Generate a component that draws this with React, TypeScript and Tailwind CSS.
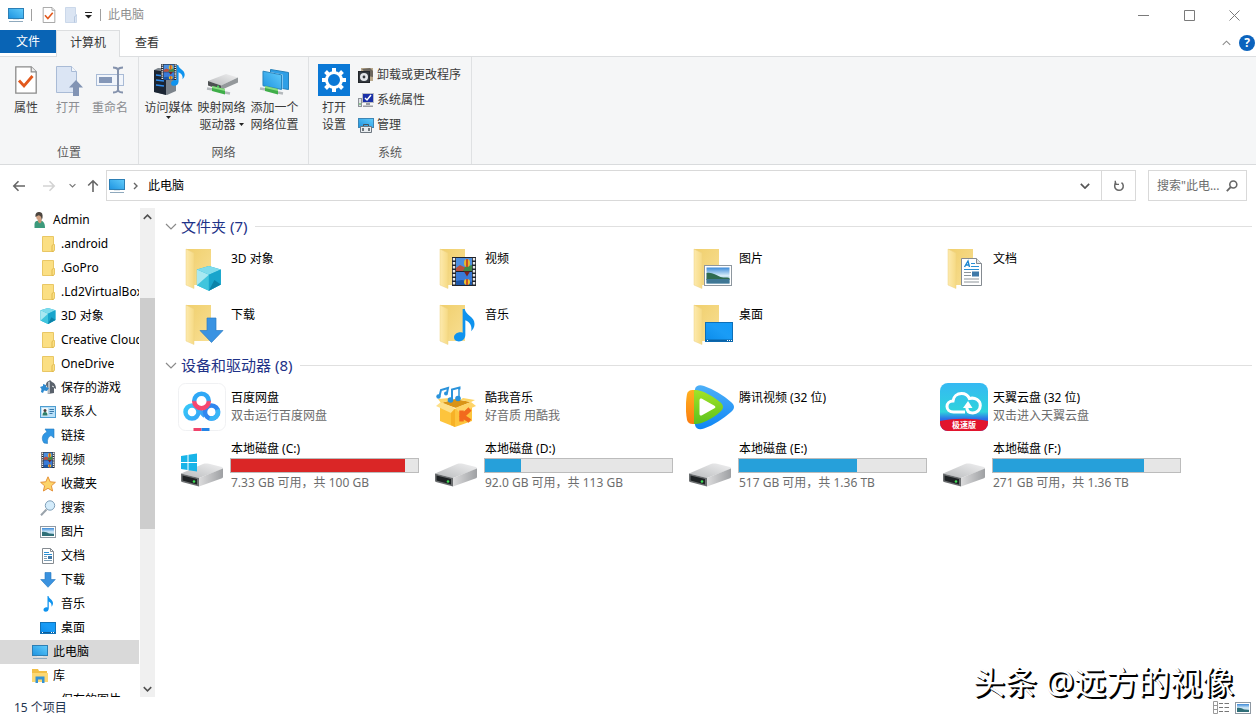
import type { ReactNode } from 'react';

type IconProps = { className?: string };

function Svg({ box, className, children }: { box: string; className: string; children: ReactNode }) {
  return (
    <svg viewBox={box} className={`shrink-0 ${className}`} fill="none" aria-hidden="true">
      {children}
    </svg>
  );
}

function Gradients() {
  return (
    <svg className="absolute size-0" aria-hidden="true">
      <defs>
        <linearGradient id="screen" x1="0" y1="1" x2="1" y2="0">
          <stop offset="0" stopColor="#1d93e0" />
          <stop offset="1" stopColor="#62ccfb" />
        </linearGradient>
        <linearGradient id="desk" x1="0" y1="1" x2="1" y2="0">
          <stop offset="0" stopColor="#0a8bea" />
          <stop offset="0.55" stopColor="#1a9cf6" />
          <stop offset="1" stopColor="#139bf8" />
        </linearGradient>
        <linearGradient id="folderBack" x1="0" y1="0" x2="1" y2="1">
          <stop offset="0" stopColor="#f0cf6c" />
          <stop offset="1" stopColor="#f8df94" />
        </linearGradient>
        <linearGradient id="folderFront" x1="0" y1="0" x2="1" y2="0">
          <stop offset="0" stopColor="#fdeaae" />
          <stop offset="1" stopColor="#f6da84" />
        </linearGradient>
        <linearGradient id="sky" x1="0" y1="0" x2="0" y2="1">
          <stop offset="0" stopColor="#3c8ad8" />
          <stop offset="0.5" stopColor="#d4ebf8" />
          <stop offset="1" stopColor="#7fb0c8" />
        </linearGradient>
        <linearGradient id="driveTop" x1="0" y1="1" x2="1" y2="0">
          <stop offset="0" stopColor="#b9bbbd" />
          <stop offset="1" stopColor="#f0f0f1" />
        </linearGradient>
        <linearGradient id="driveSide" x1="0" y1="0" x2="1" y2="0">
          <stop offset="0" stopColor="#dcdcdd" />
          <stop offset="1" stopColor="#9ea0a3" />
        </linearGradient>
        <linearGradient id="play" x1="0" y1="0" x2="0" y2="1">
          <stop offset="0" stopColor="#4db0f8" />
          <stop offset="1" stopColor="#0f86f5" />
        </linearGradient>
        <linearGradient id="playGreen" x1="0" y1="0" x2="0" y2="1">
          <stop offset="0" stopColor="#a3e327" />
          <stop offset="1" stopColor="#5cc21d" />
        </linearGradient>
        <linearGradient id="playOrange" x1="0" y1="0" x2="0" y2="1">
          <stop offset="0" stopColor="#ffb11f" />
          <stop offset="1" stopColor="#fb7c10" />
        </linearGradient>
        <linearGradient id="cloud" x1="0" y1="0" x2="0" y2="1">
          <stop offset="0" stopColor="#35b9f3" />
          <stop offset="0.6" stopColor="#2fd3dc" />
          <stop offset="0.75" stopColor="#2b6fe8" />
          <stop offset="1" stopColor="#2b52e0" />
        </linearGradient>
        <linearGradient id="baiduLeft" x1="0" y1="0" x2="1" y2="1">
          <stop offset="0" stopColor="#37c8f8" />
          <stop offset="1" stopColor="#35a6f7" />
        </linearGradient>
        <linearGradient id="baiduTop" x1="0" y1="0" x2="0" y2="1">
          <stop offset="0.45" stopColor="#2fa8f6" />
          <stop offset="0.55" stopColor="#f6466f" />
        </linearGradient>
      </defs>
    </svg>
  );
}

function PcIcon({ className = 'size-4' }: IconProps) {
  return (
    <Svg box="0 0 16 16" className={className}>
      <rect x="0.500" y="1.500" width="15" height="10" fill="url(#screen)" stroke="#2c7fb5" />
      <path d="M5 12.500h6" stroke="#dfe8ee" />
      <path d="M1 14.500h14" stroke="#8fa9bd" />
    </Svg>
  );
}

function CheckDocIcon({ className = 'size-4' }: IconProps) {
  return (
    <Svg box="0 0 22 28" className={className}>
      <path d="M.8.8h15.400l5 5v21.400H.8z" fill="#fff" stroke="#8a8a8a" strokeWidth="1.300" />
      <path d="M16.200.8v5h5" fill="#eee" stroke="#8a8a8a" strokeWidth="1.200" />
      <path d="M4 14.500l5 5.500 8.500-10" stroke="#e2581c" strokeWidth="2.800" />
    </Svg>
  );
}

function OpenDocIcon({ className = 'size-8' }: IconProps) {
  return (
    <Svg box="0 0 32 32" className={className}>
      <path d="M4.500 2.500h15l5 5v21h-20z" fill="#dbe5f4" stroke="#a9bbd6" />
      <path d="M19.500 2.500v5h5" fill="#f2f6fb" stroke="#a9bbd6" />
      <path d="M24 16l7 7.500h-4V32h-6v-8.500h-4z" fill="#8294b4" />
    </Svg>
  );
}

function RenameIcon({ className = 'size-8' }: IconProps) {
  return (
    <Svg box="0 0 32 32" className={className}>
      <rect x="2.500" y="10.500" width="27" height="11" fill="#f1f5fb" stroke="#a9bbd6" />
      <rect x="5" y="13" width="13" height="6" fill="#8497b8" />
      <path d="M19 3.500c2.500 0 4 .5 5 2 1-1.500 2.500-2 5-2M19 28.500c2.500 0 4-.5 5-2 1 1.500 2.500 2 5 2M24 5v22" stroke="#8593ad" strokeWidth="2" />
    </Svg>
  );
}

function FilmArt() {
  return (
    <>
      <rect width="24" height="29" fill="#20242c" />
      <rect x="4" y="1" width="16" height="13" fill="#4d8fe0" />
      <rect x="4" y="15" width="16" height="13" fill="#3a7bd8" />
      <path d="M4 11l4-3 4 2 8-1v5H4z" fill="#b8503f" />
      <path d="M13 10l7-2v6h-9z" fill="#3f8a4a" />
      <path d="M4 24l6-1 10 2v3H4z" fill="#1d57a8" />
      <ellipse cx="15" cy="6" rx="3" ry="4" fill="#e7b92b" />
      <path d="M15 2v8" stroke="#c02d22" strokeWidth="1.500" />
      <path d="M12 14.500l3 5 3-5z" fill="#7b241d" />
      <ellipse cx="15" cy="25" rx="3" ry="3" fill="#eec52e" />
      <path d="M15 22v6" stroke="#c02d22" strokeWidth="1.500" />
      <path d="M2 1v28M22 1v28" stroke="#e9e9e9" strokeWidth="2.400" strokeDasharray="2.400 1.600" />
    </>
  );
}

function NoteShape() {
  return (
    <path
      d="M8 0h2c.5 6 9 7 9 14.500 0 3-1.500 5.500-3 7 .8-5-1-8.500-5.500-10.500V25c0 4-3 6.500-6 6.500S0 30 0 27.500C0 24 4.500 21.500 8 23z"
      fill="#0f93ee"
    />
  );
}

function MediaIcon({ className = 'size-8' }: IconProps) {
  return (
    <Svg box="0 0 32 32" className={className}>
      <path d="M1 6l4-2 18 1v22l-9 4-13-3z" fill="#7c848c" />
      <path d="M1 6l12 2v23L1 28z" fill="#1b2533" />
      <path d="M3 11l8 1M3 16l8 1M3 21l8 1" stroke="#2f8df0" strokeWidth="1.500" />
      <g transform="translate(8 0) scale(.65 .55)">
        <FilmArt />
      </g>
      <g transform="translate(18 1) scale(.72 .66)">
        <NoteShape />
      </g>
    </Svg>
  );
}

function Cable() {
  return (
    <>
      <path d="M1 24.500l6 1M19 28.500l5 1" stroke="#b4b9bc" strokeWidth="2.500" />
      <path d="M6 22l13 3v5.500L6 27z" fill="#3fae49" />
      <path d="M6 22l13 3v2L6 24z" fill="#8bdc84" />
    </>
  );
}

function MapDriveIcon({ className = 'size-8' }: IconProps) {
  return (
    <Svg box="0 0 32 32" className={className}>
      <path d="M2 17L20 10l12 3.500-17 8z" fill="url(#driveTop)" />
      <path d="M2 17l13 4.500V26L2 21.500z" fill="#4d5052" />
      <path d="M15 21.500l17-8v5L15 26z" fill="#94989b" />
      <circle cx="12" cy="22.500" r="1" fill="#45e05a" />
      <Cable />
    </Svg>
  );
}

function NetPlaceIcon({ className = 'size-8' }: IconProps) {
  return (
    <Svg box="0 0 32 32" className={className}>
      <path d="M11.500 5.500l18 3v17l-18-3z" fill="#2f9fe6" stroke="#2580b8" />
      <path d="M3.500 6.500l20 4v16l-20-4z" fill="#d6eefb" />
      <path d="M4 7.200l18.500 3.700v14.500L4 21.700z" fill="url(#screen)" stroke="#2b86bd" />
      <Cable />
    </Svg>
  );
}

const teeth = [0, 45, 90, 135, 180, 225, 270, 315];

function GearIcon({ className = 'size-8' }: IconProps) {
  return (
    <Svg box="0 0 32 32" className={className}>
      <rect width="32" height="32" fill="#0a78d6" />
      <circle cx="16" cy="16" r="7.500" stroke="#fff" strokeWidth="3" />
      {teeth.map((angle) => (
        <path key={angle} d="M14 4h4v4h-4z" fill="#fff" transform={`rotate(${angle} 16 16)`} />
      ))}
    </Svg>
  );
}

function UninstallIcon() {
  return (
    <Svg box="0 0 16 16" className="size-4">
      <path d="M3 1h12v13H3z" fill="#b9a98c" />
      <path d="M4 2l8-1 3 3v6l-5-1z" fill="#6c675f" />
      <rect x="0.500" y="4.500" width="11" height="11" fill="#33383d" stroke="#22262a" />
      <circle cx="6" cy="10" r="4" fill="#e2e5e8" />
      <circle cx="6" cy="10" r="1.400" fill="#33383d" />
    </Svg>
  );
}

function SysPropsIcon() {
  return (
    <Svg box="0 0 16 16" className="size-4">
      <rect x="4.500" y="1.500" width="11" height="9" fill="#1a30a8" stroke="#b9bcc4" />
      <path d="M7 6l2 2 4-5" stroke="#fff" strokeWidth="1.500" />
      <path d="M8 11h4v2H8zM5 13.500h10v1.500H5z" fill="#9a9da3" />
      <rect x="0.500" y="6.500" width="3" height="8" fill="#dfe2e6" stroke="#8f949a" />
      <path d="M2 11v2" stroke="#3aa845" />
    </Svg>
  );
}

function ManageIcon() {
  return (
    <Svg box="0 0 16 16" className="size-4">
      <rect x="0.500" y="1.500" width="15" height="9" fill="url(#screen)" stroke="#3d86b5" />
      <path d="M2.500 15.500v-6h11v6z" fill="#e8ecef" stroke="#6e7780" />
      <path d="M5.500 9V7.500h5V9" stroke="#4a525a" />
      <path d="M5 11v3M11 11v3" stroke="#4a525a" strokeWidth="1.500" />
    </Svg>
  );
}

function UserIcon() {
  return (
    <Svg box="0 0 16 16" className="size-4">
      <path d="M2.500 16V12c0-2.500 2-3.500 5-3.500S13 10 13 16z" fill="#3c9a7c" />
      <path d="M6 7h3.500v3L8 11.500 6 10z" fill="#c99776" />
      <ellipse cx="7" cy="4.500" rx="2.800" ry="3.600" fill="#d2a384" />
      <path d="M3.500 5C3 1 5 0 7.500 0S11 2 10.500 6l-1 2c0-3-.5-4.500-3-4.800z" fill="#4c463f" />
    </Svg>
  );
}

function FolderSmallIcon() {
  return (
    <Svg box="0 0 16 16" className="size-4">
      <path d="M2.500.5h11v8h1v6h-1v1h-11z" fill="#fbdf83" stroke="#e9c765" />
      <path d="M13.500 8.500l-1.500 1v6h1.500" stroke="#e0b94c" />
    </Svg>
  );
}

function CubeArt() {
  return (
    <>
      <path d="M14 0l13 4v17l-13 7L1 22V4z" fill="#1cb2d3" />
      <path d="M14 0l13 4-13 6L1 4z" fill="#7fdcec" />
      <path d="M1 4l13 6v18L1 22z" fill="#40c5dd" />
      <path d="M1 4l13 6-13 12z" fill="#a8e8f1" />
      <path d="M14 10l13-6v17l-13 7z" fill="#18a5cc" />
      <path d="M14 28l13-7-7-5z" fill="#0c83a8" />
    </>
  );
}

function CubeSmallIcon() {
  return (
    <Svg box="0 0 28 28" className="size-4">
      <CubeArt />
    </Svg>
  );
}

function GamesIcon() {
  return (
    <Svg box="0 0 16 16" className="size-4">
      <path d="M6 5c0-3 2-4 3-4l1-1 2 2c3 1 4 4 4 7l-2-1v5l-6 1V9z" fill="#59616b" />
      <path d="M8 2l2-.5v12L7.500 14z" fill="#b4bbc2" />
      <path d="M0 7l3-1V4l3 1v2l3 1-2 3-3-.5L3 13l-2-1 .5-3z" fill="#2d8ad0" />
      <path d="M12 6l2 1" stroke="#e8ecef" />
    </Svg>
  );
}

function ContactsIcon() {
  return (
    <Svg box="0 0 16 16" className="size-4">
      <rect x="0.500" y="2.500" width="15" height="11" fill="#b9e0f8" stroke="#4d9dd0" />
      <rect x="2" y="4" width="6" height="7.500" fill="#f3f8fb" />
      <path d="M2.500 11.500c0-3 1-3.500 2.500-3.500s2.500.5 2.500 3.500z" fill="#2f7e68" />
      <circle cx="5" cy="6.500" r="1.500" fill="#4a4038" />
      <path d="M9.500 5.500h4.500M9.500 7.500h4.500M9.500 9.500h3" stroke="#3a79aa" />
    </Svg>
  );
}

function LinkArrowIcon() {
  return (
    <Svg box="0 0 16 16" className="size-4">
      <path d="M5 1l9 0v9l-3-2.500c-2.500 1-4 3.500-3.500 8L4 15c-3-4-2-9 3-11z" fill="#3197e4" stroke="#1f78c0" strokeWidth=".6" />
    </Svg>
  );
}

function FilmSmallIcon() {
  return (
    <Svg box="-2 0 28 29" className="size-4">
      <FilmArt />
    </Svg>
  );
}

function StarIcon() {
  return (
    <Svg box="0 0 16 16" className="size-4">
      <path d="M8 .8l2.200 5 5.200.5-4 3.500 1.200 5.200L8 12.300 3.400 15l1.200-5.200-4-3.500 5.200-.5z" fill="#fcd46a" stroke="#e5933a" />
    </Svg>
  );
}

function MagnifierIcon() {
  return (
    <Svg box="0 0 16 16" className="size-4">
      <path d="M6.500 9.500L1 15.200" stroke="#9aa3ab" strokeWidth="2" />
      <circle cx="10" cy="5.500" r="4.700" fill="#d4ecfb" stroke="#7f9fb8" />
    </Svg>
  );
}

function PictureIcon({ className = 'size-4' }: IconProps) {
  return (
    <Svg box="0 0 16 16" className={className}>
      <rect x="0.500" y="2.500" width="15" height="11" fill="#fff" stroke="#8f99a3" />
      <rect x="2" y="4" width="12" height="8" fill="url(#sky)" />
      <path d="M2 8c3-.5 5 .5 7 1.500l5 .5v2H2z" fill="#2f6f78" />
    </Svg>
  );
}

function DocArt() {
  return (
    <>
      <path d="M.5.5h15l5 5v22H.5z" fill="#fff" stroke="#858b91" />
      <path d="M15.500.5v5h5" fill="#e5e8ea" stroke="#858b91" />
      <path d="M3.500 9L7 3l1.500 6M5 7h3" stroke="#1c86d1" strokeWidth="1.400" />
      <path d="M10 5.500h4M10 8.500h8M3 11.500h15" stroke="#2b8fd4" strokeWidth="1.200" />
      <path d="M3 14.500h7M3 17.500h7M3 21h15M3 24h15" stroke="#8d9499" />
      <rect x="11" y="13.500" width="7" height="5" fill="#3f79a8" />
    </>
  );
}

function DocSmallIcon() {
  return (
    <Svg box="0 0 16 16" className="size-4">
      <path d="M2.500.5h8l3 3v12h-11z" fill="#fff" stroke="#858b91" />
      <path d="M10.500.5v3h3" stroke="#858b91" />
      <path d="M4 4.500h5M4 6.500h8" stroke="#2b8fd4" />
      <path d="M4 8.500h3M4 10.500h3M4 12.500h8" stroke="#7d9db4" />
      <path d="M8 8h4v3H8z" fill="#3f79a8" />
    </Svg>
  );
}

function DownSmallIcon() {
  return (
    <Svg box="0 0 16 16" className="size-4">
      <path d="M5 .5h6v7h4.300L8 15.300.7 7.500H5z" fill="#3a92df" stroke="#2377bd" strokeWidth=".6" />
    </Svg>
  );
}

function NoteSmallIcon() {
  return (
    <Svg box="-7 0 32 32" className="size-4">
      <NoteShape />
    </Svg>
  );
}

function DesktopSmallIcon() {
  return (
    <Svg box="0 0 16 16" className="size-4">
      <rect x="0.500" y="2.500" width="15" height="11" fill="url(#desk)" stroke="#1273b8" />
      <path d="M1 12.500h14" stroke="#0c5c98" />
      <path d="M2 12.500h1M11 12.500h1M13 12.500h1" stroke="#fff" />
    </Svg>
  );
}

function LibraryIcon() {
  return (
    <Svg box="0 0 16 16" className="size-4">
      <path d="M0 1h6l1 2h8v11H0z" fill="#f2bf45" />
      <path d="M0 5h16v9H0z" fill="#fcd873" />
      <path d="M3.500 15V8.500h9V15h-2.500v-3.500H6V15z" fill="#3492d3" />
    </Svg>
  );
}

function BigFolder({ children }: { children?: ReactNode }) {
  return (
    <Svg box="0 0 48 48" className="size-12">
      <path d="M8 4h25v36H13z" fill="url(#folderBack)" />
      <path d="M8 4l8 4v35.500L8 40z" fill="url(#folderFront)" stroke="#ecd083" strokeWidth=".5" />
      {children}
    </Svg>
  );
}

const folderArt: Record<string, ReactNode> = {
  cube: (
    <g transform="translate(18 21) scale(.92 .88)">
      <CubeArt />
    </g>
  ),
  film: (
    <g transform="translate(20 12)">
      <FilmArt />
    </g>
  ),
  picture: (
    <>
      <rect x="18.500" y="20.500" width="27" height="20" fill="#fff" stroke="#8e979f" />
      <rect x="20.500" y="22.500" width="23" height="16" fill="url(#sky)" />
      <path d="M20.500 28c6-1 9 2 14 4 4 1 6 0 9 1v2h-23z" fill="#2f6b4f" />
      <path d="M20.500 34h23v4.500h-23z" fill="#3f7795" />
    </>
  ),
  doc: (
    <g transform="translate(21 13)">
      <DocArt />
    </g>
  ),
  down: <path d="M29 17h9v12.500h7L33.500 41.500 22 29.500h7z" fill="#3a93e2" stroke="#2c7cc4" strokeWidth=".7" />,
  note: (
    <g transform="translate(22 8) scale(1.080 1.030)">
      <NoteShape />
    </g>
  ),
  desktop: (
    <>
      <rect x="19.500" y="21.500" width="27" height="19" fill="url(#desk)" stroke="#0d6fb8" />
      <path d="M19 39.500h28" stroke="#0a62a6" strokeWidth="2" />
      <path d="M21 39.500h1M41 39.500h1M43 39.500h1M45 39.500h1" stroke="#fff" />
    </>
  ),
};

function BaiduIcon() {
  return (
    <Svg box="0 0 48 48" className="size-12">
      <rect x="0.500" y="0.500" width="47" height="47" rx="7" fill="#fff" stroke="#f0f1f3" />
      <path d="M27 33c-3-2.500-5-6-8-8" stroke="#3aa4f6" strokeWidth="4.500" />
      <circle cx="14" cy="29" r="6.500" stroke="url(#baiduLeft)" strokeWidth="4.500" />
      <circle cx="33.500" cy="29" r="6.500" stroke="#2f86f0" strokeWidth="4.500" />
      <path d="M39.500 26.500a6.500 6.500 0 0 1-8 8.700" stroke="#38b6f7" strokeWidth="4.500" />
      <circle cx="23.500" cy="18" r="7.300" fill="#fff" stroke="url(#baiduTop)" strokeWidth="4.500" />
      <path d="M15.500 45h8v3h-8z" fill="#f0436b" />
      <path d="M23.500 45h8v3h-8z" fill="#2384e6" />
    </Svg>
  );
}

function KuwoIcon() {
  return (
    <Svg box="0 0 48 48" className="size-12">
      <path d="M8 21l15 5 17-5v17l-17 6-15-6z" fill="#fdc43c" />
      <path d="M9 20l14-4 16 3-15 6z" fill="#d99417" />
      <path d="M9 19l14 6-4 5L4 23z" fill="#fee08a" />
      <path d="M39 19l-16 6 5 5 16-7z" fill="#fed468" />
      <path d="M9 20l-3-4 12-1 2 2zM39 19l4-2-12-2-3 2z" fill="#fdd566" />
      <path d="M23 26v18l-4-2V30z" fill="#f7b126" />
      <path d="M29.500 27.500v11M38 26l-7.500 7L38 38" stroke="#f26a1d" strokeWidth="4.500" />
      <path d="M7.500 13l1.500-6 7-2-1 5" stroke="#2b93db" strokeWidth="2" />
      <path d="M20 17V6.500L27.500 4.500v2" stroke="#2b93db" strokeWidth="2" />
      <path d="M27 6v9" stroke="#2b93db" strokeWidth="1.500" />
      <circle cx="6.500" cy="13.500" r="2.200" fill="#2b93db" />
      <circle cx="14" cy="10.500" r="2" fill="#2b93db" />
      <circle cx="18.500" cy="17" r="2.800" fill="#2b93db" />
      <circle cx="26" cy="15.500" r="2.800" fill="#2b93db" />
    </Svg>
  );
}

function TencentIcon() {
  return (
    <Svg box="0 0 48 48" className="size-12">
      <path d="M9 6c1-4 5-4.500 9-3 10 3.500 19 9 27 16 4 3 4 7 0 10-8 7-17 13-27 16.500-4 1.500-8 1-9-3.500-2-12-2-24 0-36z" fill="url(#play)" />
      <path d="M8 7c-4-.5-6 1-7 4-1.500 9-1.500 17 0 26 1 3 3 4.500 7 4z" fill="url(#playOrange)" />
      <path d="M8 7c6-1 18 5 26 12 4 3 4 7 0 10-8 7-20 13-26 12z" fill="url(#playGreen)" />
      <path d="M13.500 17c0-1.500 1.500-2 2.500-1.300l12.500 7c1.200.8 1.200 1.900 0 2.600L16 32.300c-1 .6-2.500.2-2.500-1.300z" fill="#fff" />
    </Svg>
  );
}

function TianyiIcon() {
  return (
    <svg viewBox="0 0 48 48" className="size-12 shrink-0" fill="none" aria-hidden="true">
      <clipPath id="tianyiClip">
        <rect width="48" height="48" rx="8" />
      </clipPath>
      <g clipPath="url(#tianyiClip)">
        <rect width="48" height="48" fill="url(#cloud)" />
        <path d="M0 38c15-3 33-3 48 0v10H0z" fill="#e2142d" />
      </g>
      <path d="M25 29H13.500C9.500 29 7 26.500 7 23.500s2.500-5.500 6-5.500c.5-4.500 4-7.500 8.500-7.500 4 0 6.500 2 7.800 5 6-1.500 11 2 11 7 0 4.500-3.500 7.500-7.500 7.500-4 0-6-2-6-6" stroke="#fff" strokeWidth="3" />
      <path d="M23 25l5-7 4.500 7z" fill="#fff" />
      <text x="24" y="45" textAnchor="middle" fontSize="8" fontWeight="700" fill="#fff" fontFamily="'Noto Sans CJK SC', sans-serif">
        极速版
      </text>
    </svg>
  );
}

function DriveIcon({ windows = false }: { windows?: boolean }) {
  return (
    <Svg box="0 -4 48 48" className="size-12">
      <path d="M3 29.500L25 20c2-.6 4-.6 6-.2l12 3c1.500.4 2 1 2 2L21 34z" fill="url(#driveTop)" />
      <path d="M3 29.500L21 34v8.500L4 38c-.7-.2-1-.6-1-1.200z" fill="#6b6e70" />
      <path d="M4.500 31.500L19 35v5.500L4.500 36.500z" fill="#1e2224" />
      <path d="M21 34l24-9.500V33c0 .6-.5 1-1 1.200L21 42.500z" fill="url(#driveSide)" />
      <circle cx="16" cy="37.500" r="1.300" fill="#3ee055" />
      {windows && <path d="M3 12l6.500-1v7H3zM10.500 10.800l8.500-1.300V18h-8.500zM3 19h6.500v7L3 25zM10.500 19H19v8.500l-8.500-1.300z" fill="#18b4e8" />}
    </Svg>
  );
}

function Caret({ className = '' }: IconProps) {
  return (
    <Svg box="0 0 5 3" className={`h-[3px] w-[5px] ${className}`}>
      <path d="M0 0h5L2.500 3z" fill="#222" />
    </Svg>
  );
}

function Chevron({ className = '', d = 'M1 1l5 5 5-5', width = 1.2 }: { className?: string; d?: string; width?: number }) {
  return (
    <Svg box="0 0 12 7" className={className}>
      <path d={d} stroke="currentColor" strokeWidth={width} />
    </Svg>
  );
}

function RibbonButton({ icon, lines, disabled, caret, wide }: { icon: ReactNode; lines: string[]; disabled?: boolean; caret?: 'below' | 'inline'; wide?: boolean }) {
  return (
    <button
      type="button"
      disabled={disabled}
      className={`flex flex-col items-center ${wide ? 'w-[53px]' : 'w-[42px]'} ${disabled ? 'text-[#8b8d91]' : 'text-[#3b3b3b]'}`}
    >
      <span className="flex h-8 items-center">{icon}</span>
      <span className="mt-[3px] flex flex-col items-center leading-[17px] whitespace-nowrap">
        {lines.map((line, i) => (
          <span key={line} className="flex items-center gap-[3px]">
            {line}
            {caret === 'inline' && i === lines.length - 1 && <Caret />}
          </span>
        ))}
        {caret === 'below' && <Caret />}
      </span>
    </button>
  );
}

function RibbonGroup({ label, className, children }: { label: string; className: string; children: ReactNode }) {
  return (
    <section aria-label={label} className="flex flex-col justify-between border-r border-[#dfe1e3] pt-[7px] pb-[3px]">
      <div className={`flex ${className}`}>{children}</div>
      <div className="text-center leading-4 text-[#5a5a5a]">{label}</div>
    </section>
  );
}

type TreeItem = { name: string; icon: ReactNode; root?: boolean; selected?: boolean };

const tree: TreeItem[] = [
  { name: 'Admin', icon: <UserIcon />, root: true },
  { name: '.android', icon: <FolderSmallIcon /> },
  { name: '.GoPro', icon: <FolderSmallIcon /> },
  { name: '.Ld2VirtualBox', icon: <FolderSmallIcon /> },
  { name: '3D 对象', icon: <CubeSmallIcon /> },
  { name: 'Creative Cloud', icon: <FolderSmallIcon /> },
  { name: 'OneDrive', icon: <FolderSmallIcon /> },
  { name: '保存的游戏', icon: <GamesIcon /> },
  { name: '联系人', icon: <ContactsIcon /> },
  { name: '链接', icon: <LinkArrowIcon /> },
  { name: '视频', icon: <FilmSmallIcon /> },
  { name: '收藏夹', icon: <StarIcon /> },
  { name: '搜索', icon: <MagnifierIcon /> },
  { name: '图片', icon: <PictureIcon /> },
  { name: '文档', icon: <DocSmallIcon /> },
  { name: '下载', icon: <DownSmallIcon /> },
  { name: '音乐', icon: <NoteSmallIcon /> },
  { name: '桌面', icon: <DesktopSmallIcon /> },
  { name: '此电脑', icon: <PcIcon />, root: true, selected: true },
  { name: '库', icon: <LibraryIcon />, root: true },
  { name: '保存的图片', icon: <span className="size-4 shrink-0" /> },
];

const folders = [
  { name: '3D 对象', art: 'cube' },
  { name: '视频', art: 'film' },
  { name: '图片', art: 'picture' },
  { name: '文档', art: 'doc' },
  { name: '下载', art: 'down' },
  { name: '音乐', art: 'note' },
  { name: '桌面', art: 'desktop' },
];

const apps = [
  { name: '百度网盘', note: '双击运行百度网盘', icon: <BaiduIcon /> },
  { name: '酷我音乐', note: '好音质 用酷我', icon: <KuwoIcon /> },
  { name: '腾讯视频 (32 位)', note: '', icon: <TencentIcon /> },
  { name: '天翼云盘 (32 位)', note: '双击进入天翼云盘', icon: <TianyiIcon /> },
];

const drives = [
  { name: '本地磁盘 (C:)', note: '7.33 GB 可用，共 100 GB', used: 93, full: true },
  { name: '本地磁盘 (D:)', note: '92.0 GB 可用，共 113 GB', used: 19, full: false },
  { name: '本地磁盘 (E:)', note: '517 GB 可用，共 1.36 TB', used: 63, full: false },
  { name: '本地磁盘 (F:)', note: '271 GB 可用，共 1.36 TB', used: 81, full: false },
];

function GroupHeading({ children }: { children: string }) {
  return (
    <h2 className="flex h-6 items-center gap-1 pr-1 pl-[9px] text-[15px] leading-6 text-[#1e3287]">
      <Chevron className="h-[7px] w-3 text-[#8a8a8a]" />
      <span className="whitespace-nowrap">{children}</span>
      <span className="ml-1 h-px flex-1 bg-[#e0e0e0]" />
    </h2>
  );
}

const tileGrid = 'grid grid-cols-[repeat(auto-fill,254px)] pl-[22px]';

export default function App() {
  return (
    <div className="relative flex h-screen flex-col overflow-hidden bg-white font-['Noto_Sans','Noto_Sans_CJK_SC',sans-serif] text-xs text-black">
      <Gradients />

      <header className="flex h-[30px] shrink-0 items-center pl-2">
        <PcIcon />
        <span className="ml-[7px] h-3 w-px bg-[#a0a0a0]" />
        <button type="button" aria-label="属性" className="ml-2.5">
          <CheckDocIcon className="h-4 w-[14px]" />
        </button>
        <button type="button" aria-label="新建文件夹" className="ml-2">
          <Svg box="0 0 14 16" className="h-4 w-[14px]">
            <path d="M1.500.5h10v7h1v8h-11z" fill="#dbe5f3" stroke="#cbd8ea" />
            <path d="M12.500 8.500l-2 1v6" stroke="#b8c9e0" />
          </Svg>
        </button>
        <button type="button" aria-label="自定义快速访问工具栏" className="ml-[7px]">
          <Svg box="0 0 7 7" className="size-[7px]">
            <path d="M0 .5h7" stroke="#222" />
            <path d="M0 3h7L3.500 6.500z" fill="#222" />
          </Svg>
        </button>
        <span className="ml-2 h-3 w-px bg-[#a0a0a0]" />
        <h1 className="ml-[7px] text-[#8f8f8f]">此电脑</h1>
        <div className="ml-auto flex text-[#7a7a7a]">
          <button type="button" aria-label="最小化" className="flex w-[46px] justify-center">
            <Svg box="0 0 11 11" className="size-[11px]">
              <path d="M0 5.500h11" stroke="currentColor" />
            </Svg>
          </button>
          <button type="button" aria-label="最大化" className="flex w-[46px] justify-center">
            <Svg box="0 0 11 11" className="size-[11px]">
              <path d="M.5.500h10v10H.5z" stroke="currentColor" />
            </Svg>
          </button>
          <button type="button" aria-label="关闭" className="flex w-[44px] justify-center">
            <Svg box="0 0 11 11" className="size-[11px]">
              <path d="M.5.500l10 10M10.500.500l-10 10" stroke="currentColor" />
            </Svg>
          </button>
        </div>
      </header>

      <nav className="flex h-[27px] shrink-0 border-b border-[#dcdee0] text-[#333]">
        <button type="button" className="h-[23px] w-14 bg-[#0964b5] text-white">
          文件
        </button>
        <button type="button" className="-mb-px h-[27px] w-16 border border-b-0 border-[#dcdee0] bg-[#f5f6f7] pb-0.5">
          计算机
        </button>
        <button type="button" className="w-[54px]">
          查看
        </button>
        <div className="ml-auto flex items-center gap-2 pr-px">
          <button type="button" aria-label="最小化功能区" className="text-[#8a8a8a]">
            <Chevron className="h-[6px] w-[9px]" d="M1 6l5-5 5 5" width={1.4} />
          </button>
          <button
            type="button"
            aria-label="帮助"
            className="flex size-4 items-center justify-center rounded-full bg-[#0b63bd] text-[12px] leading-4 font-bold text-white"
          >
            ?
          </button>
        </div>
      </nav>

      <div className="flex h-[108px] shrink-0 border-b border-[#d9dbdd] bg-[#f5f6f7]">
        <RibbonGroup label="位置" className="pr-[7px] pl-[5px]">
          <RibbonButton icon={<CheckDocIcon className="h-7 w-[22px]" />} lines={['属性']} />
          <RibbonButton icon={<OpenDocIcon />} lines={['打开']} disabled />
          <RibbonButton icon={<RenameIcon />} lines={['重命名']} disabled />
        </RibbonGroup>
        <RibbonGroup label="网络" className="pr-[7px] pl-[3px]">
          <RibbonButton icon={<MediaIcon />} lines={['访问媒体']} caret="below" wide />
          <RibbonButton icon={<MapDriveIcon />} lines={['映射网络', '驱动器']} caret="inline" wide />
          <RibbonButton icon={<NetPlaceIcon />} lines={['添加一个', '网络位置']} wide />
        </RibbonGroup>
        <RibbonGroup label="系统" className="pr-2.5 pl-1">
          <RibbonButton icon={<GearIcon />} lines={['打开', '设置']} />
          <div className="-mt-0.5 flex flex-col pl-[3px] text-[#3b3b3b]">
            <button type="button" className="flex h-[25px] items-center gap-[3px]">
              <UninstallIcon />
              卸载或更改程序
            </button>
            <button type="button" className="flex h-[25px] items-center gap-[3px]">
              <SysPropsIcon />
              系统属性
            </button>
            <button type="button" className="flex h-[25px] items-center gap-[3px]">
              <ManageIcon />
              管理
            </button>
          </div>
        </RibbonGroup>
      </div>

      <div className="flex h-[43px] shrink-0 items-center pt-0 pr-[9px] pb-0.5 pl-3">
        <div className="flex w-[94px] items-center">
          <button type="button" aria-label="后退" className="text-[#666]">
            <Svg box="0 0 14 12" className="h-3 w-[14px]">
              <path d="M13 6H2M6.500 1.200L1.800 6l4.700 4.800" stroke="currentColor" strokeWidth="1.600" />
            </Svg>
          </button>
          <button type="button" aria-label="前进" disabled className="ml-4 text-[#d3d3d3]">
            <Svg box="0 0 14 12" className="h-3 w-[14px]">
              <path d="M1 6h11M7.500 1.200L12.200 6l-4.700 4.800" stroke="currentColor" strokeWidth="1.600" />
            </Svg>
          </button>
          <button type="button" aria-label="最近浏览的位置" className="ml-[13px] text-[#777]">
            <Chevron className="h-[5px] w-[7px]" width={2} />
          </button>
          <button type="button" aria-label="上移" className="ml-[11px] text-[#666]">
            <Svg box="0 0 12 14" className="h-[14px] w-3">
              <path d="M6 13V2M1.200 6.500L6 1.800l4.800 4.700" stroke="currentColor" strokeWidth="1.600" />
            </Svg>
          </button>
        </div>
        <div className="flex h-[31px] flex-1 items-center border border-[#d9d9d9]">
          <PcIcon className="ml-0.5 size-4" />
          <Svg box="0 0 5 8" className="ml-2 h-2 w-[5px]">
            <path d="M1 1l3 3-3 3" stroke="#666" strokeWidth="1.400" />
          </Svg>
          <button type="button" className="ml-2.5">
            此电脑
          </button>
          <button type="button" aria-label="以前的位置" className="mr-[11px] ml-auto text-[#555]">
            <Chevron className="h-[6px] w-2.5" width={2} />
          </button>
          <button type="button" aria-label="刷新" className="flex h-full w-[34px] items-center justify-center border-l border-[#d9d9d9] text-[#666]">
            <Svg box="0 0 12 12" className="size-3">
              <path d="M8.500 2.600A4.300 4.300 0 1 1 3.300 2.700" stroke="currentColor" strokeWidth="1.500" />
              <path d="M2.300 .8v3.600h3.700" stroke="currentColor" strokeWidth="1.400" />
            </Svg>
          </button>
        </div>
        <label className="ml-3 flex h-[31px] w-[99px] items-center border border-[#d9d9d9] pr-2 pl-2">
          <span className="sr-only">搜索此电脑</span>
          <input type="text" placeholder={'搜索"此电...'} className="w-0 min-w-0 flex-1 bg-transparent outline-none placeholder:text-[#6d6d6d]" />
          <Svg box="0 0 12 12" className="size-3">
            <circle cx="7.300" cy="4.500" r="3.500" stroke="#666" strokeWidth="1.600" />
            <path d="M4.700 7.200L.8 11.200" stroke="#666" strokeWidth="1.800" />
          </Svg>
        </label>
      </div>

      <div className="flex min-h-0 flex-1">
        <aside className="w-[139px] shrink-0 overflow-hidden">
          <ul>
            {tree.map((item) => (
              <li key={item.name}>
                <a
                  href="#"
                  className={`flex h-6 items-center gap-[5px] whitespace-nowrap ${item.root ? 'pl-8' : 'pl-10'} ${item.selected ? 'bg-[#d9d9d9]' : ''}`}
                >
                  {item.icon}
                  {item.name}
                </a>
              </li>
            ))}
          </ul>
        </aside>
        <div className="ml-px flex w-4 shrink-0 flex-col border-r border-white bg-[#f0f0f0] text-[#505050]">
          <button type="button" aria-label="向上滚动" className="flex h-[17px] shrink-0 items-center justify-center">
            <Chevron className="h-[6px] w-[9px]" d="M1 6l5-5 5 5" width={2} />
          </button>
          <div className="flex-[73]" />
          <div className="flex-[231] bg-[#cdcdcd]" />
          <div className="flex-[151]" />
          <button type="button" aria-label="向下滚动" className="flex h-[17px] shrink-0 items-center justify-center">
            <Chevron className="h-[6px] w-[9px]" width={2} />
          </button>
        </div>

        <main className="min-w-0 flex-1 overflow-hidden pt-1.5">
          <GroupHeading>文件夹 (7)</GroupHeading>
          <ul className={`${tileGrid} pt-[7px]`}>
            {folders.map((folder) => (
              <li key={folder.name} className="flex h-14 gap-[5px]">
                <BigFolder>{folderArt[folder.art]}</BigFolder>
                <span className="pt-[5px] leading-[18px]">{folder.name}</span>
              </li>
            ))}
          </ul>

          <div className="-mt-1">
            <GroupHeading>设备和驱动器 (8)</GroupHeading>
          </div>
          <ul className={`${tileGrid} pt-1.5`}>
            {apps.map((app) => (
              <li key={app.name} className="flex h-14 gap-[5px]">
                {app.icon}
                <div className="pt-1.5 leading-[18px]">
                  <div>{app.name}</div>
                  <div className="text-[#6d6d6d]">{app.note}</div>
                </div>
              </li>
            ))}
            {drives.map((drive) => (
              <li key={drive.name} className="flex h-14 gap-1 pt-px">
                <DriveIcon windows={drive.full} />
                <div className="w-[189px] leading-[18px]">
                  <div className="pl-px">{drive.name}</div>
                  <div className="mb-px h-[15px] border border-[#bcbcbc] bg-[#e6e6e6]">
                    <div className={`h-full ${drive.full ? 'bg-[#da2626]' : 'bg-[#26a0da]'}`} style={{ width: `${drive.used}%` }} />
                  </div>
                  <div className="pl-px whitespace-nowrap text-[#6d6d6d]">{drive.note}</div>
                </div>
              </li>
            ))}
          </ul>
        </main>
      </div>

      <footer className="flex h-[21px] shrink-0 items-center pr-[5px] pl-[14px] text-[#1f3550]">
        15 个项目
        <button type="button" aria-label="详细信息" className="ml-auto">
          <Svg box="0 0 16 14" className="h-[14px] w-4">
            <path d="M.5.500h4v12h-4zM.5 4.500h4M.5 8.500h4" stroke="#9a9a9a" />
            <path d="M6 2.500h4M11.500 2.500H16M6 6.500h4M11.500 6.500H16M6 10.500h4M11.500 10.500H16" stroke="#777" />
          </Svg>
        </button>
        <button type="button" aria-label="大图标" className="ml-1.5">
          <PictureIcon />
        </button>
      </footer>

      <div className="pointer-events-none absolute right-[22px] bottom-4 text-[32px] leading-10 whitespace-nowrap text-white [text-shadow:2px_2px_0_#000,1px_1px_0_#000]">
        头条 @远方的视像
      </div>
    </div>
  );
}
